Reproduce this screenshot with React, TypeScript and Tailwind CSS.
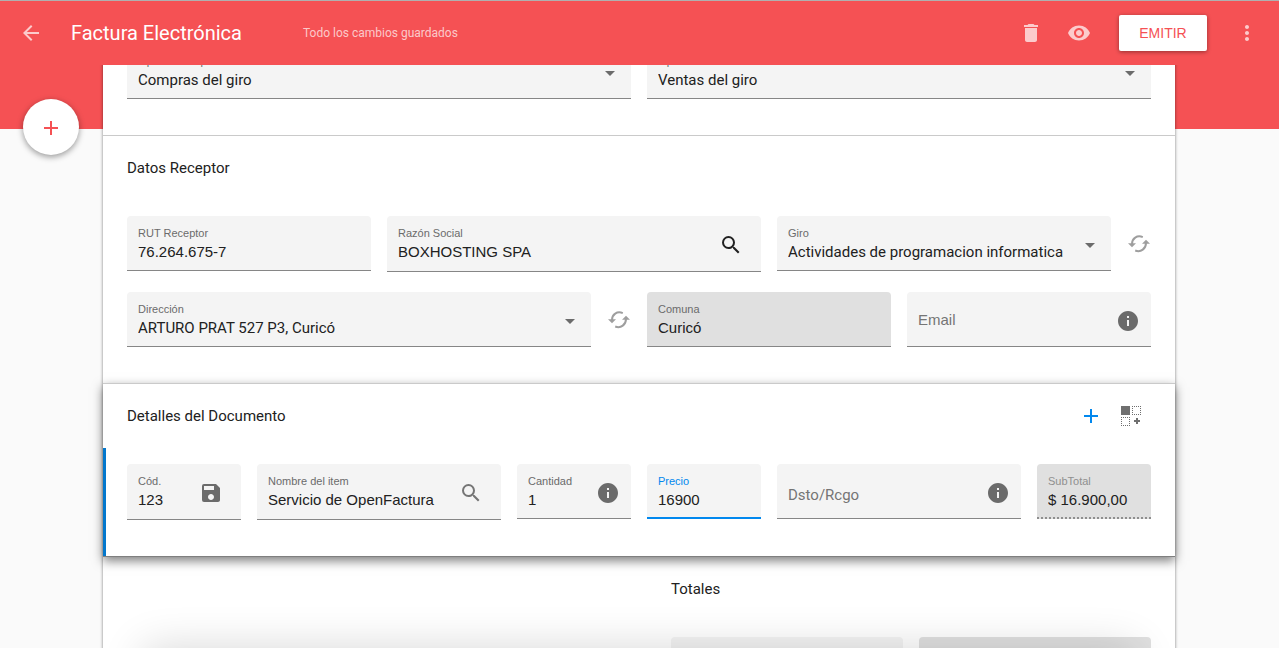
import React from 'react'
import clsx from 'clsx'
import {
  MdAdd,
  MdArrowBack,
  MdDelete,
  MdInfo,
  MdMoreVert,
  MdRemoveRedEye,
  MdSave,
  MdSearch,
} from 'react-icons/md'

const box = 'relative flex rounded-t bg-[#f4f4f4] border-b border-[#868686]'

type FieldProps = {
  id: string
  label: string
  value?: string
  className?: string
  tall?: boolean
  disabled?: boolean
  active?: boolean
  total?: boolean
  icon?: React.ReactNode
}

const Field = ({ id, label, value, className, tall, disabled, active, total, icon }: FieldProps) => (
  <div
    className={clsx(
      'relative flex rounded-t pl-[11px]',
      tall ? 'h-14' : 'h-[55px]',
      disabled || total ? 'bg-[#e0e0e0]' : 'bg-[#f4f4f4]',
      active && 'border-b-2 border-[#0288ee]',
      total && 'border-b-2 border-dotted border-[#8e8e8e]',
      !active && !total && 'border-b border-[#868686]',
      className
    )}
  >
    <div className="min-w-0 flex-1 pt-2.5">
      <label
        htmlFor={id}
        className={clsx(
          'block text-[11px] leading-[14px]',
          active ? 'text-[#0288ee]' : total ? 'text-[#8f8f8f]' : 'text-[#6b6b6b]'
        )}
      >
        {label}
      </label>
      <input
        id={id}
        defaultValue={value}
        readOnly={disabled || total}
        className="block h-[23px] w-full bg-transparent text-[15px] text-[#212121] outline-none"
      />
    </div>
    {icon}
  </div>
)

type EmptyFieldProps = { id: string; label: string; className?: string; round?: boolean }

const EmptyField = ({ id, label, className, round }: EmptyFieldProps) => (
  <div className={clsx(box, 'h-[55px] pl-[11px]', className)}>
    <input
      id={id}
      aria-label={label}
      placeholder={label}
      className={clsx(
        'min-w-0 flex-1 bg-transparent text-[15px] outline-none placeholder:text-[#757575]',
        round ? 'pt-2 font-[Roboto,sans-serif]' : 'pt-0.5'
      )}
    />
    <InfoButton />
  </div>
)

type SelectProps = { id: string; label: string; value: string; className?: string }

const Select = ({ id, label, value, className }: SelectProps) => (
  <div className={clsx(box, 'h-[55px]', className)}>
    <div className="min-w-0 flex-1 pt-2.5">
      <label htmlFor={id} className="block pl-[11px] text-[11px] leading-[14px] text-[#6b6b6b]">
        {label}
      </label>
      <select
        id={id}
        className="block h-6 w-full appearance-none bg-transparent pl-[11px] font-[Roboto,sans-serif] text-[15px] leading-6 text-[#212121] outline-none"
      >
        <option>{value}</option>
      </select>
    </div>
    <svg className="pointer-events-none absolute right-4 top-[27px]" width="10" height="5" viewBox="0 0 10 5">
      <path d="M0 0h10L5 5z" fill="#6b6b6b" />
    </svg>
  </div>
)

const IconButton = ({ label, className, children }: { label: string; className?: string; children: React.ReactNode }) => (
  <button type="button" aria-label={label} className={clsx('flex size-6 shrink-0 items-center justify-center', className)}>
    {children}
  </button>
)

const InfoButton = () => (
  <IconButton label="Información" className="mt-[17px] mr-[11px] text-[#6b6b6b]">
    <MdInfo size={24} />
  </IconButton>
)

const RefreshButton = () => (
  <IconButton label="Actualizar" className="mt-4">
    <svg width="24" height="24" viewBox="0 0 24 24" fill="none" stroke="#9e9e9e" strokeWidth="2">
      <path d="M5 12C5 6.5 10 2.8 15.8 5.1" />
      <path d="M19 11C19 16.5 14 20.8 8.2 18.5" />
      <path d="M1 11.3h8L5 15.3z" fill="#9e9e9e" stroke="none" />
      <path d="M15 11.7h8L19 7.7z" fill="#9e9e9e" stroke="none" />
    </svg>
  </IconButton>
)

const title = 'font-[Roboto,sans-serif] text-[15px] leading-6 text-[#212121]'

const App = () => {
  return (
    <div className="relative flex h-screen flex-col overflow-hidden bg-[#fafafa] font-['Liberation_Sans',Arial,sans-serif]">
      <div className="absolute inset-x-0 top-0 h-[129px] bg-[#f55154]" />

      <header className="relative z-20 flex h-[65px] shrink-0 items-center border-t border-[#b0b0b0] bg-[#f55154] pl-[19px] pr-5 font-[Roboto,sans-serif] text-white">
        <IconButton label="Volver" className="mr-7 text-white/70">
          <MdArrowBack size={24} />
        </IconButton>
        <h1 className="w-58 text-xl">Factura Electrónica</h1>
        <p className="flex-1 text-xs text-white/70">Todo los cambios guardados</p>
        <IconButton label="Eliminar" className="mr-6 text-white/70">
          <MdDelete size={24} />
        </IconButton>
        <IconButton label="Vista previa" className="mr-7 text-white/70">
          <MdRemoveRedEye size={24} />
        </IconButton>
        <button
          type="button"
          className="mr-7 h-9 w-22 rounded-xs bg-white font-['Liberation_Sans',Arial,sans-serif] text-sm text-[#f55154] shadow-[0_1px_4px_rgba(0,0,0,0.4)]"
        >
          EMITIR
        </button>
        <IconButton label="Más opciones" className="text-white/70">
          <MdMoreVert size={24} />
        </IconButton>
      </header>

      <button
        type="button"
        aria-label="Nuevo documento"
        className="absolute left-[23px] top-[99px] z-10 flex size-14 items-center justify-center rounded-full bg-white pt-0.5 text-[#f55154] shadow-[0_2px_6px_rgba(0,0,0,0.4)]"
      >
        <MdAdd size={24} />
      </button>

      <main className="relative -mt-[21px] ml-[103px] mr-[104px] flex-1 shrink-0 bg-white shadow-[0_0_3px_rgba(0,0,0,0.5)]">
        <section className="grid grid-cols-2 gap-4 px-6 pb-9">
          <Select id="compra" label="Tipo de Compra" value="Compras del giro" />
          <Select id="venta" label="Tipo de Venta" value="Ventas del giro" />
        </section>

        <section className="border-t border-[#cacaca] px-6 pb-9 pt-5">
          <h2 className={clsx(title, 'mb-9')}>Datos Receptor</h2>
          <div className="grid grid-cols-8 items-start gap-x-4 gap-y-5">
            <Field id="rut" label="RUT Receptor" value="76.264.675-7" className="col-span-2" />
            <Field
              id="razon"
              label="Razón Social"
              value="BOXHOSTING SPA"
              className="col-span-3"
              tall
              icon={
                <IconButton label="Buscar" className="mr-[18px] mt-[17px] text-[#212121]">
                  <MdSearch size={24} />
                </IconButton>
              }
            />
            <div className="col-span-3 flex gap-4">
              <Select id="giro" label="Giro" value="Actividades de programacion informatica" className="flex-1" />
              <RefreshButton />
            </div>
            <div className="col-span-4 flex gap-4">
              <Select id="direccion" label="Dirección" value="ARTURO PRAT 527 P3, Curicó" className="flex-1" />
              <RefreshButton />
            </div>
            <Field id="comuna" label="Comuna" value="Curicó" className="col-span-2" disabled />
            <EmptyField id="email" label="Email" className="col-span-2" />
          </div>
        </section>

        <section className="relative border-y border-t-[#cacaca] border-b-[#7f7f7f] bg-white pt-5 shadow-[0_4px_10px_rgba(0,0,0,0.5)]">
          <div className="mb-5 flex items-center px-6">
            <h2 className={clsx(title, 'flex-1')}>Detalles del Documento</h2>
            <IconButton label="Agregar detalle" className="mr-4 text-[#0288ee]">
              <MdAdd size={24} />
            </IconButton>
            <IconButton label="Duplicar detalle" className="mr-2">
              <svg width="20" height="20" viewBox="0 0 20 20" fill="#6f6f6f">
                <path d="M0 0h9v9H0z" />
                <path
                  d="M11 .5h9M11 8.5h9M11.5 0v9M19.5 0v9M0 11.5h9M0 19.5h9M.5 11v9M8.5 11v9"
                  fill="none"
                  stroke="#6f6f6f"
                  strokeDasharray="1 1"
                />
                <path d="M15 12h2v2h2v2h-2v2h-2v-2h-2v-2h2z" />
              </svg>
            </IconButton>
          </div>
          <div className="grid grid-cols-8 items-start gap-4 border-l-3 border-[#0277cc] pb-9 pl-[21px] pr-6 pt-4">
            <Field
              id="codigo"
              label="Cód."
              value="123"
              tall
              icon={
                <IconButton label="Guardar item" className="mr-[18px] mt-[17px] text-[#6b6b6b]">
                  <MdSave size={24} />
                </IconButton>
              }
            />
            <Field
              id="item"
              label="Nombre del item"
              value="Servicio de OpenFactura"
              className="col-span-2"
              tall
              icon={
                <IconButton label="Buscar item" className="mr-[18px] mt-[17px] text-[#757575]">
                  <MdSearch size={24} />
                </IconButton>
              }
            />
            <Field id="cantidad" label="Cantidad" value="1" icon={<InfoButton />} />
            <Field id="precio" label="Precio" value="16900" active />
            <EmptyField id="dscto" label="Dsto/Rcgo" className="col-span-2" round />
            <Field id="subtotal" label="SubTotal" value="$ 16.900,00" total />
          </div>
        </section>

        <section className="ml-auto w-[504px] pr-6 pt-5">
          <h2 className={clsx(title, 'mb-9')}>Totales</h2>
          <div className="grid grid-cols-2 gap-4">
            <input aria-label="Descuento global" className="h-14 rounded-t bg-[#f4f4f4]" />
            <input aria-label="Total" readOnly className="h-14 rounded-t bg-[#e0e0e0]" />
          </div>
        </section>
      </main>

      <div className="pointer-events-none absolute left-36 right-36 top-full h-20 shadow-[0_0_44px_rgba(0,0,0,0.16)]" />
    </div>
  )
}

export default App
